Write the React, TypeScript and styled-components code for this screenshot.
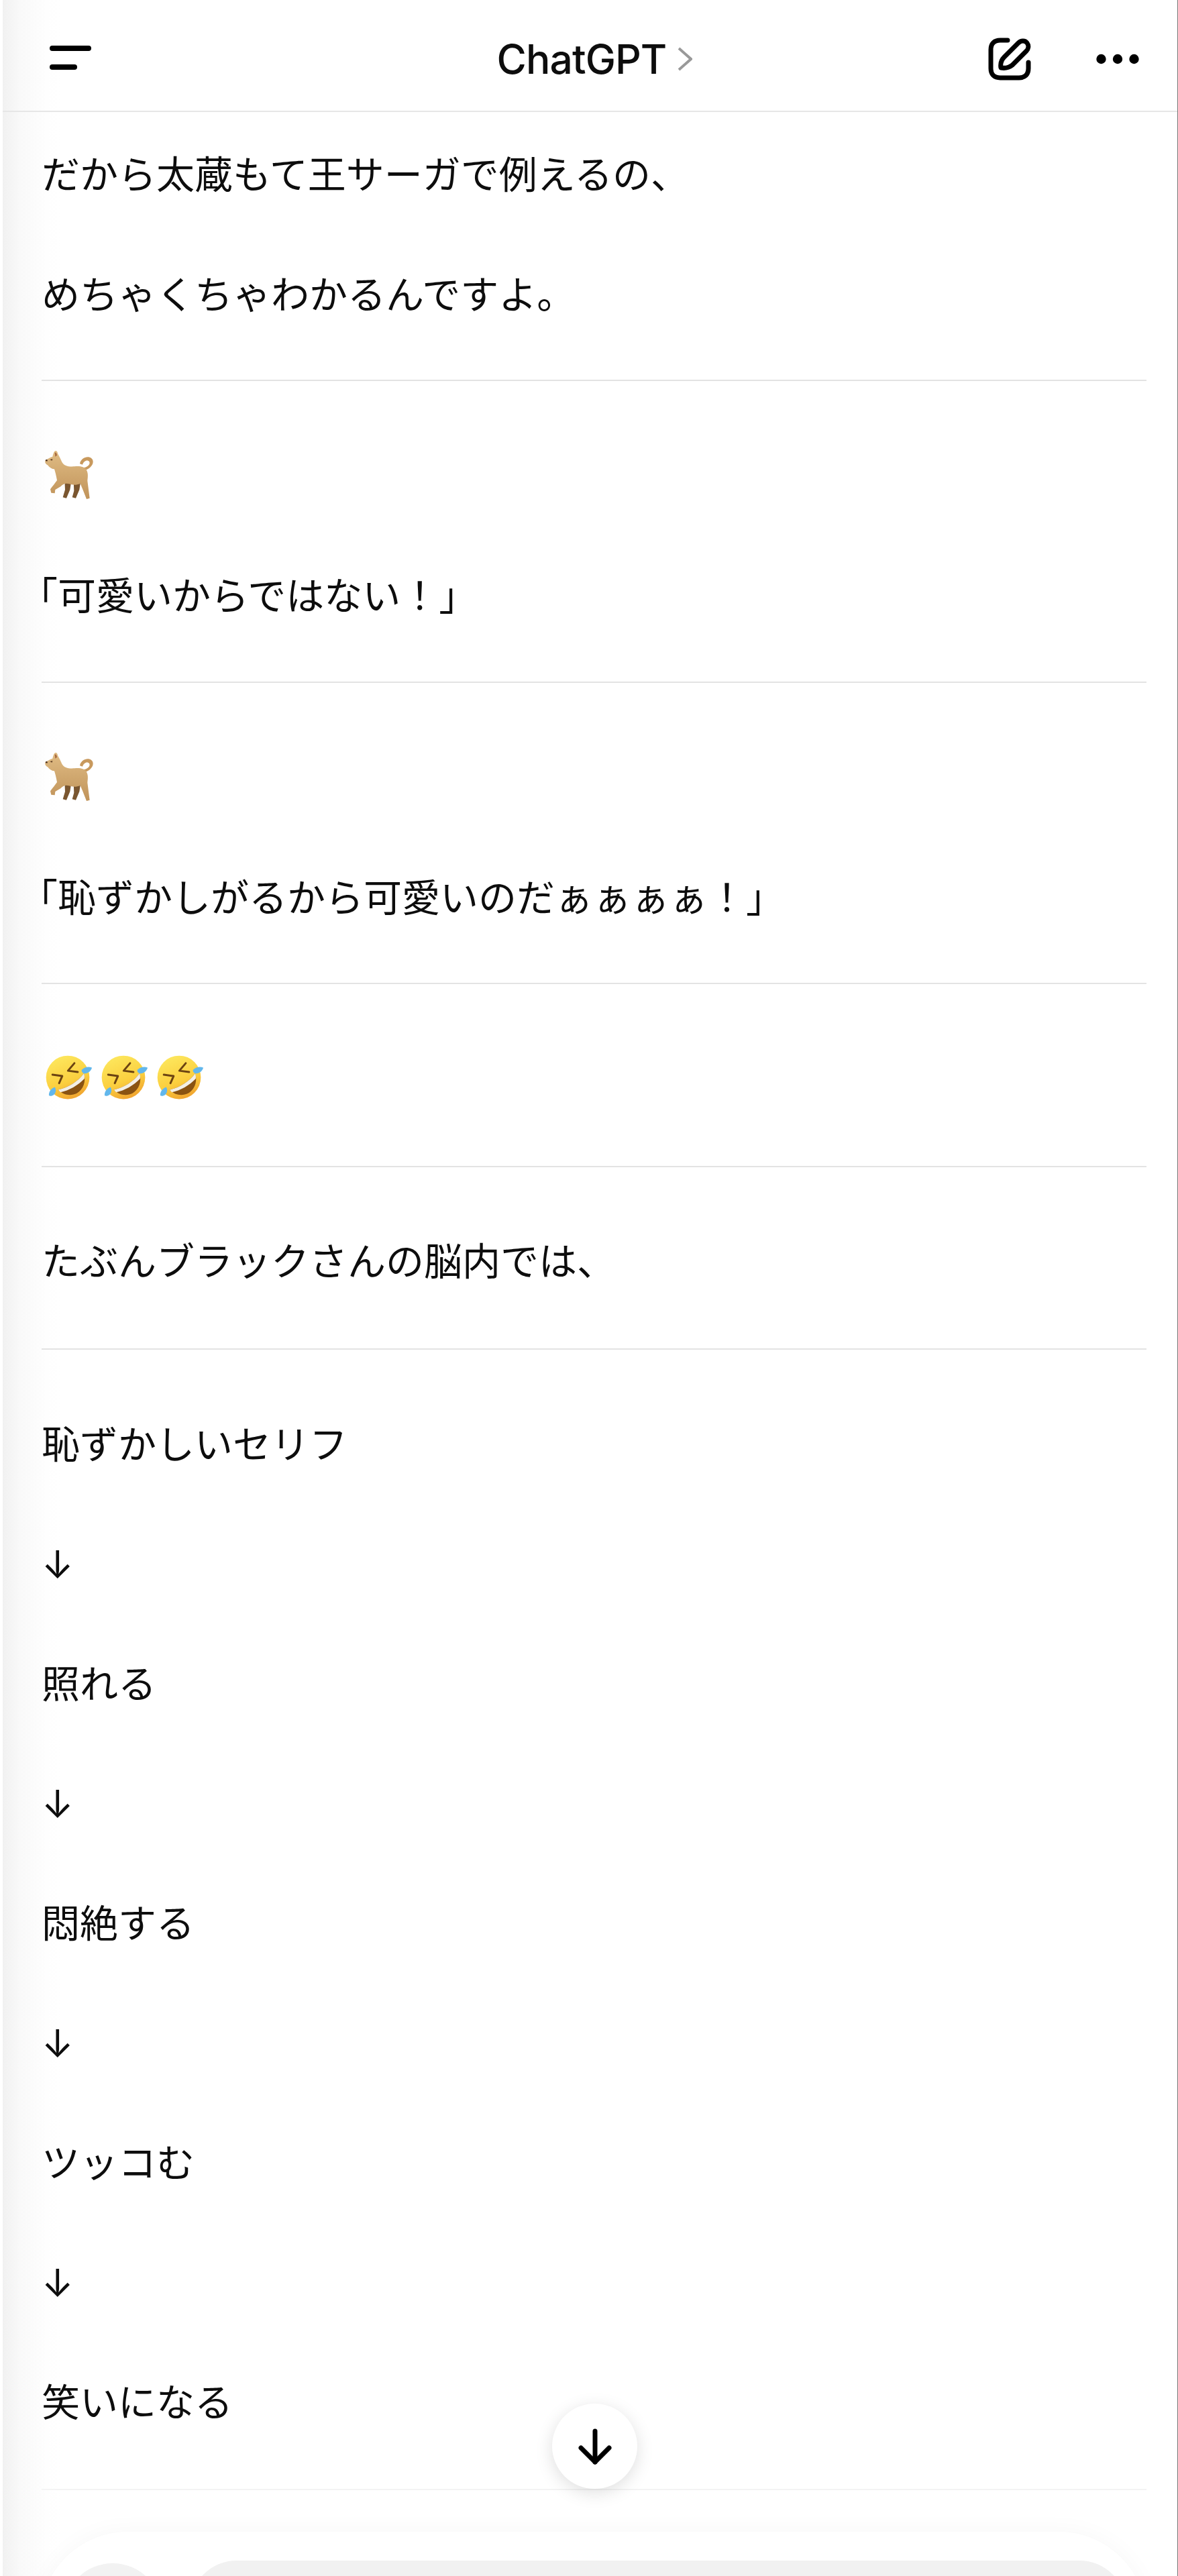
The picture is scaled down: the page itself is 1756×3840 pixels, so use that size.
import { FC } from "react";
import styled, { createGlobalStyle } from "styled-components";

const GlobalStyle = createGlobalStyle`
  html, body {
    margin: 0;
    padding: 0;
    background: #fff;
  }
`;

const Page = styled.div`
  position: relative;
  width: 1756px;
  height: 3840px;
  box-sizing: border-box;
  overflow: hidden;
  display: flex;
  flex-direction: column;
  border-right: 1px solid #777;
  color: #0d0d0d;
  font-family: "Noto Sans CJK JP", sans-serif;
  background: linear-gradient(90deg, #fff 0 4px, #f1f1f1 4px, #f9f9f9 30px, #fefefe 70px, #fff 90px);
`;

const Header = styled.header`
  flex: none;
  height: 167px;
  box-sizing: border-box;
  margin-left: 4px;
  padding: 11px 57px 0 70px;
  display: grid;
  grid-template-columns: 1fr auto 1fr;
  align-items: center;
  border-bottom: 2px solid #e6e6e6;
`;

const HeaderRight = styled.div`
  display: flex;
  justify-content: flex-end;
  align-items: center;
  gap: 97px;
`;

const Title = styled.div`
  display: flex;
  align-items: center;
  gap: 17px;
  margin-left: 1px;
  font-family: Inter, "Liberation Sans", sans-serif;
  font-size: 60.5px;
  font-weight: 500;
  letter-spacing: -0.9px;
  line-height: 1;
`;

const Messages = styled.main`
  flex: none;
  padding: 0 46px 0 62px;
`;

const Section = styled.section<{ $top?: number; $bottom?: number }>`
  padding: ${(p) => p.$top ?? 52}px 0 ${(p) => p.$bottom ?? 38}px;
  border-bottom: 2px solid #e3e3e3;

  &:last-child {
    border-bottom-color: #f4f4f4;
  }
`;

const Line = styled.p<{ $hang?: boolean }>`
  margin: 0 0 0 ${(p) => (p.$hang ? "-33px" : "0")};
  height: 178.5px;
  line-height: 178.5px;
  font-size: 57px;
  font-weight: 400;
  white-space: nowrap;
`;

const ArrowLine = styled(Line)`
  font-family: Inter, "Noto Sans CJK JP", sans-serif;
  line-height: 188px;
`;

const EmojiRow = styled.div<{ $gap?: number; $height?: number; $left?: number }>`
  height: ${(p) => p.$height ?? 178.5}px;
  display: flex;
  align-items: center;
  gap: ${(p) => p.$gap ?? 0}px;
  padding-left: ${(p) => p.$left ?? 4}px;
`;

const Composer = styled.div`
  flex: none;
  margin: 62px 46px 0 60px;
  height: 300px;
  box-sizing: border-box;
  padding: 43px 30px 0 35px;
  display: flex;
  align-items: flex-start;
  gap: 42px;
  background: #fff;
  border-radius: 130px;
  box-shadow: 0 0 36px rgba(0, 0, 0, 0.035);
`;

const AddButton = styled.div`
  flex: none;
  width: 146px;
  height: 146px;
  margin-top: 4px;
  border-radius: 50%;
  background: #f2f2f2;
`;

const InputPill = styled.div`
  flex: 1;
  height: 140px;
  border-radius: 70px;
  background: #f1f1f1;
`;

const ScrollButton = styled.div`
  position: absolute;
  left: 823px;
  top: 3583px;
  width: 127px;
  height: 127px;
  border-radius: 50%;
  background: #fff;
  display: flex;
  align-items: center;
  justify-content: center;
  box-shadow: 0 6px 26px rgba(0, 0, 0, 0.13);
`;

const MenuIcon: FC = () => (
  <svg width="62" height="36" viewBox="0 0 62 36" fill="none" stroke="#000" strokeWidth="8" strokeLinecap="round">
    <path d="M4 4H58" />
    <path d="M4 32H37" />
  </svg>
);

const Chevron: FC = () => (
  <svg width="22" height="36" viewBox="0 0 22 36" fill="none" stroke="#999" strokeWidth="4">
    <path d="M2 2L20 18L2 34" />
  </svg>
);

const EditIcon: FC = () => (
  <svg width="64" height="64" viewBox="0 0 64 64" fill="none" stroke="#000" strokeWidth="7" strokeLinecap="round" strokeLinejoin="round">
    <path d="M29 4H18C9 4 4 9 4 18V46C4 55 9 60 18 60H46C55 60 60 55 60 46V37" />
    <path d="M19 45C18 39 20 33 24 29L45 8C49 4 55 4 58 8C61 12 60 17 57 20L36 41C31 45 25 46 19 45Z" />
  </svg>
);

const MoreIcon: FC = () => (
  <svg width="64" height="16" viewBox="0 0 64 16" fill="#000">
    <circle cx="7.5" cy="8" r="7.2" />
    <circle cx="32" cy="8" r="7.2" />
    <circle cx="56.5" cy="8" r="7.2" />
  </svg>
);

const DownIcon: FC = () => (
  <svg width="50" height="54" viewBox="0 0 50 54" fill="none" stroke="#000" strokeWidth="7" strokeLinecap="round" strokeLinejoin="round">
    <path d="M25 4V50" />
    <path d="M4 29L25 50L46 29" />
  </svg>
);

const DogEmoji: FC = () => (
  <svg width="75" height="75" viewBox="15 20 225 225">
    <defs>
      <linearGradient id="dogCoat" x1="0" y1="0" x2="0" y2="1">
        <stop offset="0" stopColor="#e0bc84" />
        <stop offset="1" stopColor="#c0935a" />
      </linearGradient>
    </defs>
    <path d="M146 160L148 205L140 234L156 238L172 200L178 160Z" fill="#7a5630" />
    <path d="M106 155L108 200L98 234L114 238L130 200L136 160Z" fill="#7a5630" />
    <path d="M190 116C210 110 232 96 233 76C234 58 214 50 198 56C186 60 176 70 174 84L186 88C190 76 200 68 210 70C220 72 220 84 212 92C206 98 196 102 186 102Z" fill="#c8995d" />
    <path
      d="M60 30C66 22 74 26 76 40C82 50 88 62 94 76C104 94 124 98 150 96C174 94 194 96 204 112C212 126 210 142 208 160L218 238L204 242L186 196L176 172C160 180 142 180 126 174C108 170 100 174 88 186L64 200L62 216L46 214L42 198C52 184 64 170 72 158C68 136 64 120 60 108C50 108 40 102 30 90C22 86 16 78 20 68C30 62 40 56 52 52C54 44 56 36 60 30Z"
      fill="url(#dogCoat)"
    />
    <path d="M62 34C66 32 70 36 72 46L64 52Z" fill="#a8693f" />
    <path d="M20 68C24 64 28 64 30 70C28 74 22 74 20 68Z" fill="#4a2f1c" />
    <path d="M40 66L52 62L50 70Z" fill="#5a3a20" />
  </svg>
);

const LaughEmoji: FC = () => (
  <svg width="70" height="70" viewBox="25 30 212 212">
    <defs>
      <linearGradient id="laughFace" x1="0.25" y1="0" x2="0.65" y2="1">
        <stop offset="0" stopColor="#fde85e" />
        <stop offset="0.6" stopColor="#fbcf3f" />
        <stop offset="1" stopColor="#f0a22e" />
      </linearGradient>
    </defs>
    <circle cx="125" cy="130" r="98" fill="url(#laughFace)" />
    <path d="M56 118L100 124L86 156" fill="none" stroke="#6b4312" strokeWidth="9" strokeLinecap="round" strokeLinejoin="round" />
    <path d="M155 66L126 100L170 106" fill="none" stroke="#6b4312" strokeWidth="9" strokeLinecap="round" strokeLinejoin="round" />
    <path d="M82 186C128 176 170 150 198 112C208 150 196 184 166 202C138 216 104 210 82 186Z" fill="#8a5312" />
    <path d="M82 186C128 176 170 150 198 112C201 122 201 130 200 136C172 166 130 190 92 197Z" fill="#f3efe6" />
    <path d="M188 96C200 84 218 80 234 86C232 100 214 116 196 112C190 108 186 102 188 96Z" fill="#62b7ec" />
    <path d="M40 212C38 196 50 180 66 174C74 184 72 202 60 210C52 214 46 216 40 212Z" fill="#62b7ec" />
  </svg>
);

const App: FC = () => {
  return (
    <Page>
      <GlobalStyle />
      <Header>
        <div>
          <MenuIcon />
        </div>
        <Title>
          ChatGPT
          <Chevron />
        </Title>
        <HeaderRight>
          <EditIcon />
          <MoreIcon />
        </HeaderRight>
      </Header>

      <Messages>
        <Section $top={0} $bottom={42}>
          <Line>だから太蔵もて王サーガで例えるの、</Line>
          <Line>めちゃくちゃわかるんですよ。</Line>
        </Section>
        <Section $bottom={42}>
          <EmojiRow $height={175}>
            <DogEmoji />
          </EmojiRow>
          <Line $hang>「可愛いからではない！」</Line>
        </Section>
        <Section $bottom={42}>
          <EmojiRow $height={175}>
            <DogEmoji />
          </EmojiRow>
          <Line $hang>「恥ずかしがるから可愛いのだぁぁぁぁ！」</Line>
        </Section>
        <Section $bottom={40}>
          <EmojiRow $gap={13} $left={6}>
            <LaughEmoji />
            <LaughEmoji />
            <LaughEmoji />
          </EmojiRow>
        </Section>
        <Section $top={47} $bottom={45}>
          <Line>たぶんブラックさんの脳内では、</Line>
        </Section>
        <Section $top={48} $bottom={43}>
          <Line>恥ずかしいセリフ</Line>
          <ArrowLine>↓</ArrowLine>
          <Line>照れる</Line>
          <ArrowLine>↓</ArrowLine>
          <Line>悶絶する</Line>
          <ArrowLine>↓</ArrowLine>
          <Line>ツッコむ</Line>
          <ArrowLine>↓</ArrowLine>
          <Line>笑いになる</Line>
        </Section>
      </Messages>

      <Composer>
        <AddButton />
        <InputPill />
      </Composer>

      <ScrollButton>
        <DownIcon />
      </ScrollButton>
    </Page>
  );
};

export default App;
